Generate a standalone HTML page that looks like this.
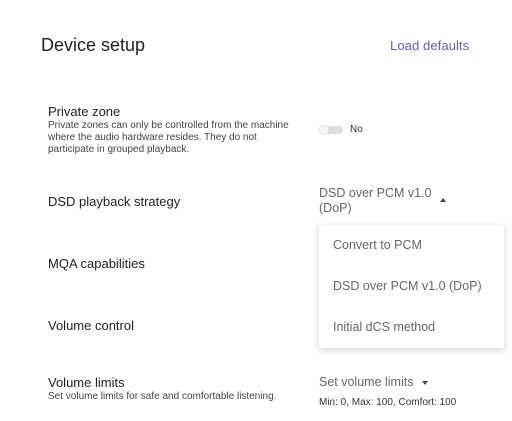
<!DOCTYPE html>
<html><head><style>
*{margin:0;padding:0;box-sizing:border-box}
body{width:512px;height:421px;background:#fff;font-family:"Liberation Sans",sans-serif;color:#222;position:relative;overflow:hidden}
.a{position:absolute;white-space:nowrap}
.lbl{font-size:13px;color:#222}
.desc{font-size:10px;color:#444;line-height:12px}
.val{font-size:12.5px;color:#666}
.mi{font-size:12.5px;color:#666;left:333px}
</style></head><body>
<div class="a" style="left:41px;top:35px;font-size:18px;color:#222">Device setup</div>
<div class="a" style="left:390px;top:38px;font-size:13.2px;color:#5b5fd6">Load defaults</div>

<div class="a lbl" style="left:48px;top:104px">Private zone</div>
<div class="a desc" style="left:48px;top:120px">Private zones can only be controlled from the machine<br>where the audio hardware resides. They do not<br>participate in grouped playback.</div>
<div class="a" style="left:319px;top:126px;width:24px;height:8px;border-radius:4px;background:#ddd"></div>
<div class="a" style="left:319px;top:125px;width:10px;height:10px;border-radius:5px;background:#f4f4f4;box-shadow:0 0 1px rgba(0,0,0,.3)"></div>
<div class="a" style="left:350px;top:124px;font-size:10px;color:#333">No</div>

<div class="a lbl" style="left:48px;top:194px">DSD playback strategy</div>
<div class="a val" style="left:319px;top:186px;line-height:15px">DSD over PCM v1.0<br>(DoP)</div>
<div class="a" style="left:440px;top:198px;width:0;height:0;border-left:3px solid transparent;border-right:3px solid transparent;border-bottom:4px solid #444"></div>

<div class="a lbl" style="left:48px;top:256px">MQA capabilities</div>
<div class="a lbl" style="left:48px;top:318px">Volume control</div>

<div class="a" style="left:319px;top:225px;width:185px;height:123px;background:#fff;box-shadow:0 2px 8px rgba(0,0,0,.18);border-radius:2px"></div>
<div class="a mi" style="top:238px">Convert to PCM</div>
<div class="a mi" style="top:279px">DSD over PCM v1.0 (DoP)</div>
<div class="a mi" style="top:320px">Initial dCS method</div>

<div class="a lbl" style="left:48px;top:375px">Volume limits</div>
<div class="a desc" style="left:48px;top:391px">Set volume limits for safe and comfortable listening.</div>
<div class="a val" style="left:319px;top:375px">Set volume limits</div>
<div class="a" style="left:422px;top:381px;width:0;height:0;border-left:3px solid transparent;border-right:3px solid transparent;border-top:4px solid #444"></div>
<div class="a" style="left:319px;top:397px;font-size:10px;color:#333">Min: 0, Max: 100, Comfort: 100</div>
</body></html>
